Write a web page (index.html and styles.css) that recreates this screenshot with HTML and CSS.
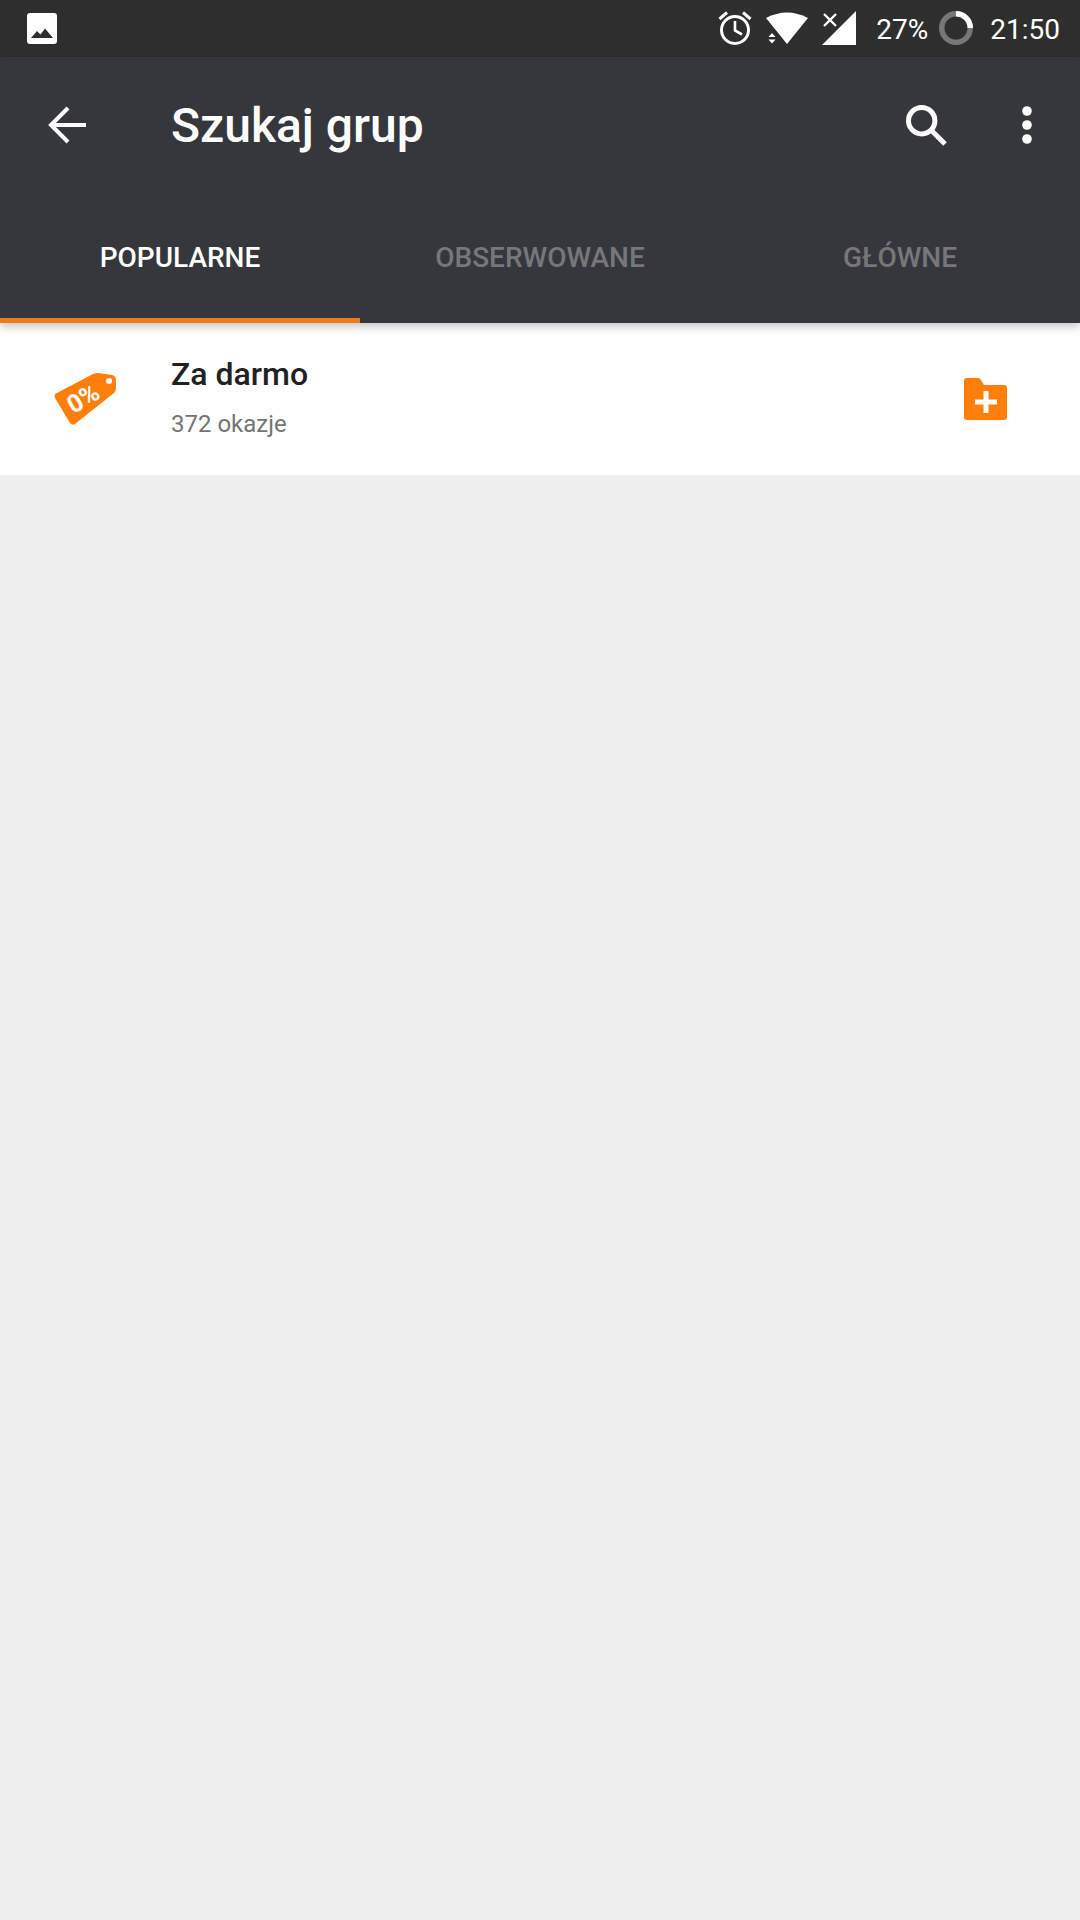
FILE: index.html
```html
<!DOCTYPE html>
<html lang="pl">
<head>
  <meta charset="UTF-8" />
  <title>Szukaj grup</title>
  <link rel="stylesheet" href="styles.css">
</head>
<body>
  <!-- Status bar -->
  <div class="status-bar">
    <svg class="ico-picture" width="30" height="31" viewBox="0 0 30 31">
      <rect width="30" height="31" rx="3" fill="#fff"/>
      <path d="M4 25 L10 18 L13.5 21.500 L18 15.500 L26 25 Z" fill="#2e2e2e"/>
    </svg>
    <div class="status-right">
      <svg class="ico-alarm" width="34" height="36" viewBox="0 0 34 36">
        <circle cx="17" cy="20" r="13.5" fill="none" stroke="#fff" stroke-width="3"/>
        <path d="M17 11 V20.5 L24 24.5" fill="none" stroke="#fff" stroke-width="2.6"/>
        <path d="M1.5 9 L9 2.5 M32.5 9 L25 2.5" stroke="#fff" stroke-width="3"/>
      </svg>
      <svg class="ico-wifi" width="42" height="33" viewBox="0 0 42 33">
        <path d="M0 6 Q21 -5 42 6 L21 32 Z" fill="#fff"/>
        <path d="M2.500 25 L6 21 L9.500 25 Z M2.500 27.500 L6 31.500 L9.500 27.500 Z" fill="#fff"/>
      </svg>
      <svg class="ico-signal" width="34" height="34" viewBox="0 0 34 34">
        <path d="M34 0 V34 H0 Z" fill="#fff"/>
        <path d="M2 3 L14 15 M14 3 L2 15" stroke="#fff" stroke-width="2.4"/>
      </svg>
      <span class="status-text battery-pct">27%</span>
      <svg class="ico-battery" width="34" height="34" viewBox="0 0 34 34">
        <circle cx="17" cy="17" r="14.250" fill="none" stroke="#777" stroke-width="5.500"/>
        <path d="M17 2.750 A14.250 14.250 0 0 1 31.250 17" fill="none" stroke="#fff" stroke-width="5.500"/>
      </svg>
      <span class="status-text clock">21:50</span>
    </div>
  </div>

  <!-- Toolbar + tabs -->
  <header class="app-header">
    <div class="toolbar">
      <svg class="ico-back" width="39" height="38" viewBox="0 0 39 38">
        <path d="M38 19 H3 M20 2 L3 19 L20 36" fill="none" stroke="#fff" stroke-width="4"/>
      </svg>
      <h1 class="page-title">Szukaj grup</h1>
      <svg class="ico-search" width="41" height="41" viewBox="0 0 41 41">
        <circle cx="15.700" cy="15.700" r="13.200" fill="none" stroke="#fff" stroke-width="5"/>
        <path d="M25.500 25.500 L39 39" stroke="#fff" stroke-width="5"/>
      </svg>
      <svg class="ico-more" width="10" height="38" viewBox="0 0 10 38">
        <circle cx="5" cy="5" r="4.800" fill="#fff"/>
        <circle cx="5" cy="19" r="4.800" fill="#fff"/>
        <circle cx="5" cy="33" r="4.800" fill="#fff"/>
      </svg>
    </div>
    <nav class="tabs">
      <div class="tab active">POPULARNE</div>
      <div class="tab">OBSERWOWANE</div>
      <div class="tab">GŁÓWNE</div>
    </nav>
  </header>

  <!-- Group list -->
  <div class="group-row">
    <svg class="ico-tag" width="64" height="58" viewBox="0 0 64 58">
      <path d="M1 24 L39 4 Q41 3 44 3 L58 5 Q62 6 62 10 L62 18 Q62 21 60 23 L21 54 Q18 56 16 53 L1 28 Q0 26 1 24 Z" fill="#ff7f0a"/>
      <circle cx="55" cy="11" r="3" fill="#fff"/>
      <text class="tag-label" x="29" y="37" transform="rotate(-31 29 28)">0%</text>
    </svg>
    <div class="group-info">
      <div class="group-name">Za darmo</div>
      <div class="group-count">372 okazje</div>
    </div>
    <svg class="ico-folder" width="44" height="44" viewBox="0 0 44 44">
      <path d="M3 1 H14 Q16 1 17 3 L20 8 H40 Q43 8 43 11 V40 Q43 43 40 43 H3 Q0 43 0 40 V4 Q0 1 3 1 Z" fill="#ff7f0a"/>
      <path d="M11 25 H33 M22 14 V36" stroke="#fff" stroke-width="5"/>
    </svg>
  </div>
</body>
</html>
```

FILE: styles.css
```css
* {
  margin: 0;
  padding: 0;
  box-sizing: border-box;
}

body {
  font-family: Roboto, sans-serif;
  background-color: #eee;
  min-height: 100vh;
}

svg {
  display: block;
  flex-shrink: 0;
}

/* Status bar */
.status-bar {
  height: 57px;
  background-color: #2e2e2e;
  display: flex;
  align-items: center;
  justify-content: space-between;
  padding: 0 20px 1px 27px;
}

.status-right {
  display: flex;
  align-items: center;
}

.status-text {
  font-size: 28px;
  color: #fff;
  padding-top: 2px;
}

.ico-wifi {
  margin-left: 14px;
}

.ico-signal {
  margin-left: 14px;
}

.battery-pct {
  margin-left: 20px;
}

.ico-battery {
  margin-left: 11px;
}

.clock {
  margin-left: 17px;
}

/* Toolbar */
.app-header {
  background-color: #35373c;
  box-shadow: 0 4px 8px rgba(0, 0, 0, 0.22);
  position: relative;
}

.toolbar {
  height: 136px;
  display: flex;
  align-items: center;
  padding: 0 48px;
}

.page-title {
  font-size: 48px;
  font-weight: 500;
  color: #fff;
  margin-left: 84px;
  flex: 1;
}

.ico-more {
  margin-left: 75px;
}

/* Tabs */
.tabs {
  height: 130px;
  display: grid;
  grid-template-columns: repeat(3, 1fr);
}

.tab {
  font-size: 28px;
  font-weight: 500;
  color: #76777a;
  text-align: center;
  padding-top: 48px;
}

.tab.active {
  color: #fff;
  border-bottom: 5px solid #ee7c1a;
}

/* List row */
.group-row {
  height: 152px;
  background-color: #fff;
  display: flex;
  align-items: center;
  padding: 0 72px 0 54px;
}

.tag-label {
  font-family: Roboto, sans-serif;
  font-size: 25px;
  font-weight: 700;
  fill: #fff;
  text-anchor: middle;
}

.group-info {
  flex: 1;
  margin-left: 53px;
  padding-bottom: 5px;
}

.group-name {
  font-size: 32px;
  font-weight: 500;
  color: #212121;
}

.group-count {
  font-size: 24px;
  color: #757575;
  margin-top: 17px;
}
```
